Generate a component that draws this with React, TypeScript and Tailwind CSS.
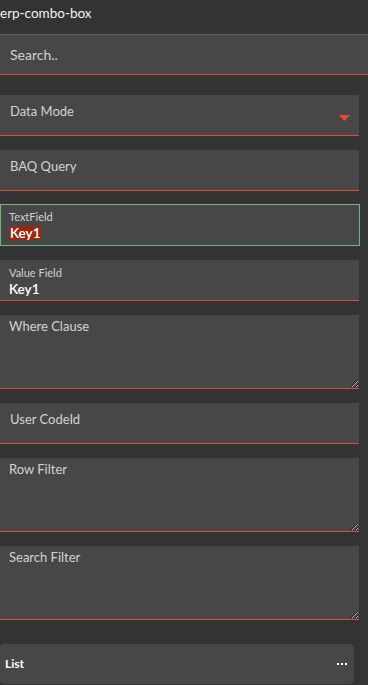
import React from "react";

const font = { fontFamily: "Lato, 'Open Sans', sans-serif" };

function PlainField({ label, children }: { label: string; children?: React.ReactNode }) {
  return (
    <div className="relative h-[41px] w-[359px] bg-[#474747] border-b border-b-[#e34b2f] pl-[10px] pt-[6px] text-[13px] leading-[20px] text-[#d0d3d6]">
      {label}
      {children}
    </div>
  );
}

function AreaField({ label }: { label: string }) {
  return (
    <textarea
      placeholder={label}
      className="block h-[74px] w-[359px] bg-[#474747] border-b border-b-[#e34b2f] pl-[9px] pt-[1px] text-[13px] leading-[20px] text-[#d0d3d6] placeholder:text-[#d0d3d6] outline-none [color-scheme:dark]"
      style={font}
    />
  );
}

function LabeledField({ label, value, focused }: { label: string; value: string; focused?: boolean }) {
  return (
    <div
      className={
        focused
          ? "h-[42px] w-[360px] bg-[#474747] border border-[#72b47c] pl-[8px] pt-[5px]"
          : "h-[41px] w-[359px] bg-[#474747] border-b border-b-[#e34b2f] pl-[9px] pt-[6px]"
      }
    >
      <div className="text-[11px] leading-[14px] text-[#d0d3d6]">{label}</div>
      <div className="text-[13.5px] leading-[18px] font-semibold text-white">
        {focused ? (
          <span className="inline-block h-[14px] leading-[14px] bg-[#982812] pl-[1px] pr-[1px] mt-[2px]">{value}</span>
        ) : (
          value
        )}
      </div>
    </div>
  );
}

export default function App() {
  return (
    <div className="w-[368px] h-[685px] overflow-hidden bg-[#333333] flex flex-col" style={font}>
      <div className="h-[34px] shrink-0 pt-[4px] text-[13.5px] leading-[18px] text-[#f2f2f2]">erp-combo-box</div>

      <div className="h-[41px] shrink-0 bg-[#474747] border-t border-t-[#5d5d5d] border-b border-b-[#e34b2f] pl-[10px] flex items-center text-[14px] text-[#d0d3d6]">
        Search..
      </div>

      <div className="flex flex-1">
        <div className="w-[360px] pt-[20px] flex flex-col">
          <PlainField label="Data Mode">
            <svg className="absolute left-[339px] top-[20px]" width="11" height="6" viewBox="0 0 11 6">
              <path d="M0 0 H11 L5.5 6 Z" fill="#e34b2f" />
            </svg>
          </PlainField>
          <div className="h-[14px] shrink-0" />
          <PlainField label="BAQ Query" />
          <div className="h-[13px] shrink-0" />
          <LabeledField label="TextField" value="Key1" focused />
          <div className="h-[14px] shrink-0" />
          <LabeledField label="Value Field" value="Key1" />
          <div className="h-[14px] shrink-0" />
          <AreaField label="Where Clause" />
          <div className="h-[14px] shrink-0" />
          <PlainField label="User CodeId" />
          <div className="h-[14px] shrink-0" />
          <AreaField label="Row Filter" />
          <div className="h-[14px] shrink-0" />
          <AreaField label="Search Filter" />
          <div className="h-[24px] shrink-0" />
          <div className="h-[40px] w-[354px] shrink-0 rounded-[4px] bg-[#474747] flex items-center justify-between pl-[5px] pr-[7px]">
            <span className="text-[12px] font-bold text-white">List</span>
            <span className="flex gap-[2px]">
              <span className="w-[2px] h-[2px] bg-white" />
              <span className="w-[2px] h-[2px] bg-white" />
              <span className="w-[2px] h-[2px] bg-white" />
            </span>
          </div>
        </div>
        <div className="flex-1 bg-[#363636]" />
      </div>
    </div>
  );
}
